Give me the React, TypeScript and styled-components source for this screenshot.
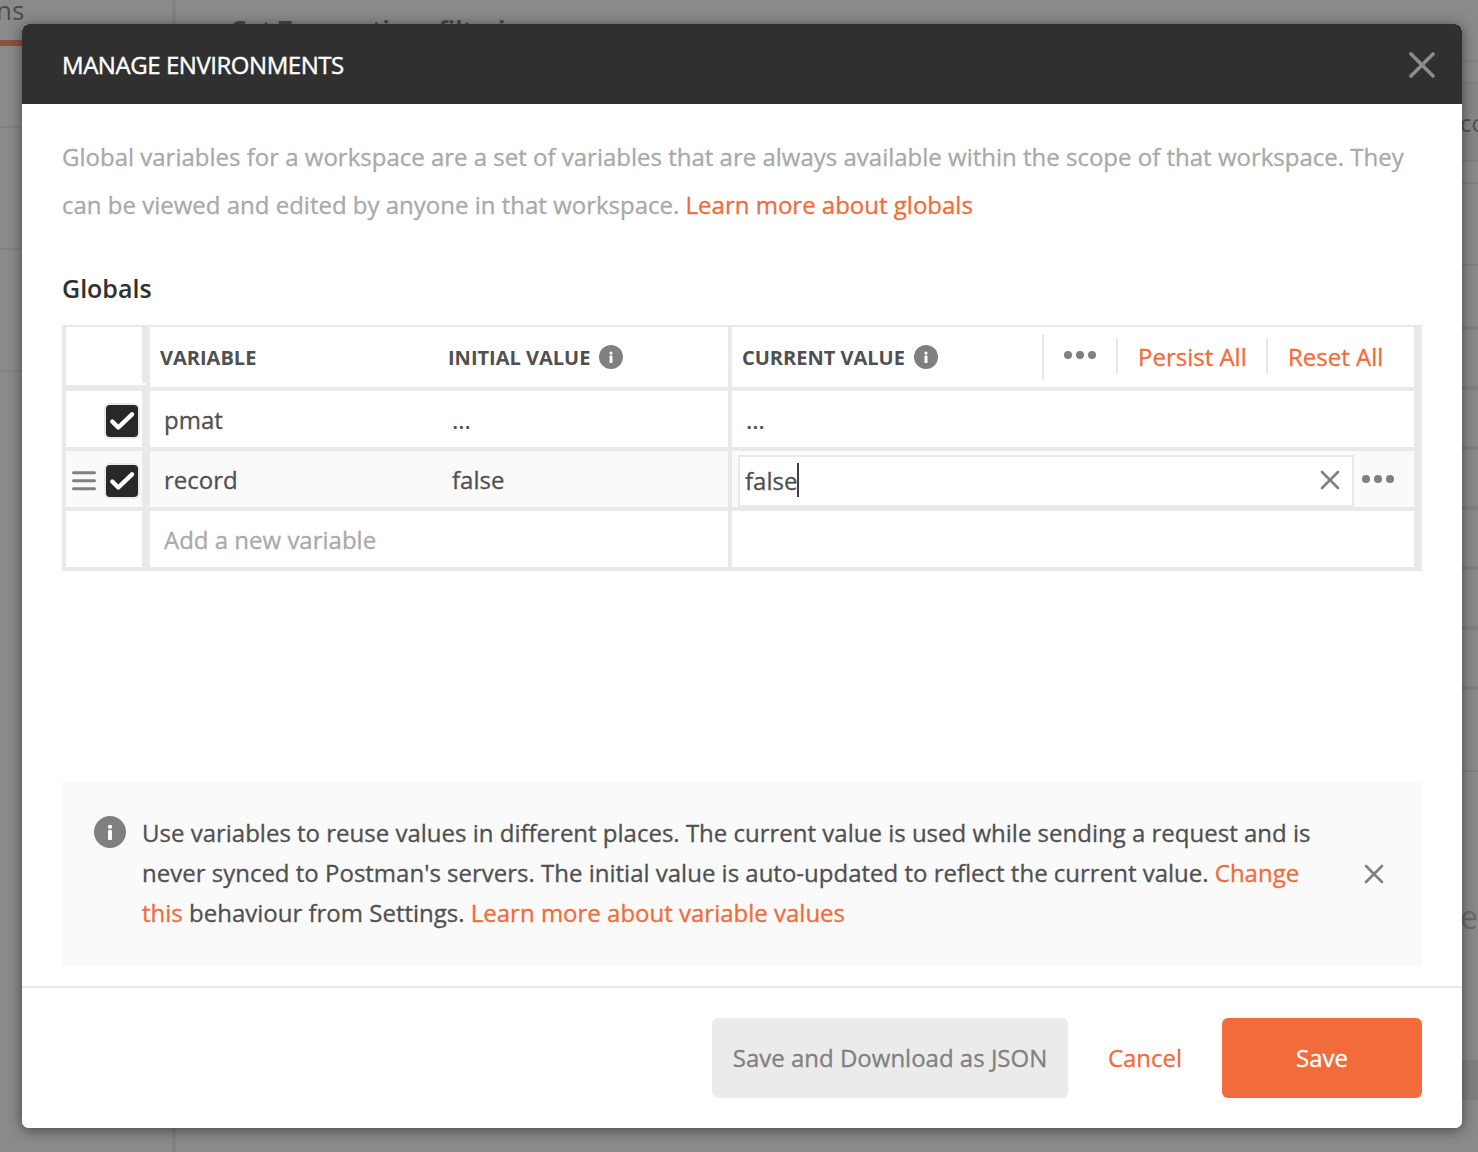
import React from "react";
import styled, { createGlobalStyle, css } from "styled-components";

const GlobalStyle = createGlobalStyle`
  * { box-sizing: border-box; }
  body { margin: 0; background: #8a8a8a; }
  button { font: inherit; letter-spacing: inherit; border: 0; padding: 0; background: none; cursor: pointer; }
`;

const LINE = "#e9e9e9";
const ORANGE = "#f26b3a";
const GREY = "#808080";

const Screen = styled.div`
  position: relative;
  display: flex;
  width: 1478px;
  height: 1152px;
  overflow: hidden;
  background: #8a8a8a;
  color: #505050;
  font-family: "Open Sans", "Noto Sans", sans-serif;
  font-size: 24px;
`;

/* Dimmed workspace behind the dialog */
const Sidebar = styled.aside`
  width: 176px;
  flex: none;
  border-right: 4px solid #828282;
`;
const SidebarTab = styled.div`
  height: 46px;
  border-bottom: 6px solid #8f5040;
  line-height: 20px;
  font-size: 26px;
  color: #4c4c4c;
  padding-left: 0;
  text-indent: -4px;
`;
const SidebarItem = styled.div<{ $height: number }>`
  height: ${(p) => p.$height}px;
  border-bottom: 2px solid #838383;
`;
const Workspace = styled.main`
  flex: 1;
  display: flex;
  flex-direction: column;
`;
const RequestTitle = styled.div`
  height: 62px;
  display: flex;
  gap: 16px;
  padding: 11px 0 0 26px;
  line-height: 36px;
  font-weight: 700;
  color: #484848;
  border-bottom: 2px solid #828282;
`;
const Strip = styled.div<{ $height: number; $line?: number; $fill?: string }>`
  flex: none;
  display: flex;
  align-items: center;
  justify-content: flex-end;
  height: ${(p) => p.$height}px;
  border-bottom: ${(p) => p.$line ?? 0}px solid #808080;
  background: ${(p) => p.$fill ?? "transparent"};
`;
const StripText = styled.span<{ $size: number; $color: string }>`
  width: 18px;
  overflow: hidden;
  white-space: nowrap;
  font-size: ${(p) => p.$size}px;
  color: ${(p) => p.$color};
`;

/* Dialog */
const Dialog = styled.section`
  position: absolute;
  left: 22px;
  top: 24px;
  width: 1440px;
  height: 1104px;
  display: flex;
  flex-direction: column;
  border-radius: 7px;
  overflow: hidden;
  background: #fff;
`;
const DialogShadow = styled(Dialog)`
  overflow: visible;
  box-shadow: 0 2px 14px rgba(0, 0, 0, 0.5);
`;
const Header = styled.header`
  height: 80px;
  flex: none;
  display: flex;
  align-items: center;
  justify-content: space-between;
  padding: 1px 27px 0 40px;
  background: #303030;
  color: #fff;
`;
const Title = styled.h1`
  margin: 0;
  font-size: 24px;
  font-weight: 500;
  letter-spacing: -0.45px;
  -webkit-text-stroke: 0.4px #fff;
`;
const Body = styled.div`
  flex: 1;
  display: flex;
  flex-direction: column;
  padding: 29px 40px 20px;
`;
const Description = styled.p`
  margin: 0;
  line-height: 48px;
  color: #a9a9a9;
  white-space: nowrap;
  -webkit-text-stroke: 0.3px currentColor;
`;
const Link = styled.a`
  color: ${ORANGE};
  cursor: pointer;
`;
const SectionTitle = styled.h2`
  margin: 42px 0 20px;
  font-size: 25px;
  line-height: 34px;
  font-weight: 600;
  color: #303030;
`;

const Table = styled.div`
  display: grid;
  grid-template-columns: 76px 288px 290px 682px;
  grid-template-rows: 60px 56px 56px 56px;
  gap: 4px;
  padding: 2px 4px 4px;
  background: ${LINE};
`;
const Cell = styled.div<{ $active?: boolean; $muted?: boolean }>`
  display: flex;
  align-items: center;
  padding: 0 0 0 14px;
  background: ${(p) => (p.$active ? "#fafafa" : "#fff")};
  color: ${(p) => (p.$muted ? "#a9a9a9" : "#505050")};
  -webkit-text-stroke: 0.3px currentColor;
`;
const NameCell = styled(Cell)`
  margin-left: 4px;
  width: 288px;
`;
const HandleCell = styled(Cell)`
  justify-content: space-between;
  padding: 4px 4px 0 6px;
`;
const HeadCorner = styled(Cell)`
  position: relative;
  height: 58px;
  &::after {
    content: "";
    position: absolute;
    right: -4px;
    bottom: 0;
    width: 4px;
    height: 2px;
    background: #fff;
  }
`;
const headText = css`
  gap: 9px;
  padding-left: 10px;
  font-size: 20px;
  font-weight: 700;
  -webkit-text-stroke: 0;
`;
const HeadCell = styled(Cell)`
  ${headText}
`;
const HeadNameCell = styled(NameCell)`
  ${headText}
`;
const HeadActions = styled.div`
  display: flex;
  align-items: center;
  height: 46px;
  margin-left: auto;
  padding-right: 31px;
  border-left: 2px solid ${LINE};
  font-size: 24px;
  font-weight: 400;
  -webkit-text-stroke: 0.3px currentColor;
`;
const MoreAction = styled.button`
  display: flex;
  padding: 0 20px 4px;
`;
const TextAction = styled.button<{ $width: number }>`
  height: 36px;
  width: ${(p) => p.$width}px;
  margin-bottom: 2px;
  border-left: 2px solid ${LINE};
  color: ${ORANGE};
  text-align: left;
  padding-left: 20px;
  white-space: nowrap;
`;
const Checkbox = styled.span`
  display: flex;
  width: 32px;
  height: 32px;
  margin-left: auto;
  border-radius: 4px;
  background: #282828;
  box-shadow: 0 0 0 2px #e9e9e9;
`;
const Editor = styled.div`
  align-self: flex-end;
  display: flex;
  align-items: center;
  width: 616px;
  height: 52px;
  padding: 0 12px 2px 5px;
  border: 2px solid ${LINE};
  background: #fff;
`;
const EditingCell = styled(Cell)`
  padding-left: 6px;
`;
const Caret = styled.i`
  width: 2px;
  height: 34px;
  margin-right: auto;
  background: #404040;
`;
const RowMore = styled.button`
  display: flex;
  margin-left: 8px;
`;

const Notice = styled.aside`
  display: flex;
  margin-top: auto;
  height: 184px;
  padding: 31px 32px 0;
  background: #fafafa;
`;
const NoticeText = styled.p`
  margin: 0 0 0 16px;
  line-height: 40px;
  white-space: nowrap;
  -webkit-text-stroke: 0.3px currentColor;
`;
const NoticeIcon = styled.span`
  display: flex;
  padding-top: 3px;
`;
const NoticeClose = styled.button`
  display: flex;
  height: 20px;
  margin: 51px 6px 0 auto;
`;

const Footer = styled.footer`
  height: 142px;
  flex: none;
  display: flex;
  justify-content: flex-end;
  padding: 30px 40px;
  border-top: 2px solid ${LINE};
`;
const Button = styled.button<{ $kind: "primary" | "secondary" | "text" }>`
  height: 80px;
  border-radius: 6px;
  padding-bottom: 2px;
  white-space: nowrap;
  -webkit-text-stroke: 0.3px currentColor;
  ${(p) =>
    p.$kind === "primary"
      ? css`width: 200px; background: ${ORANGE}; color: #fff;`
      : p.$kind === "secondary"
      ? css`width: 356px; background: #ebebeb; color: #808080;`
      : css`width: 154px; color: ${ORANGE};`}
`;

const InfoIcon = ({ size }: { size: number }) => (
  <svg width={size} height={size} viewBox="0 0 32 32">
    <circle cx="16" cy="16" r="16" fill={GREY} />
    <circle cx="16" cy="10.8" r="2.1" fill="#fff" />
    <rect x="14" y="14" width="4" height="10" rx="0.8" fill="#fff" />
  </svg>
);
const CloseIcon = ({ size, stroke, color = GREY }: { size: number; stroke: number; color?: string }) => (
  <svg width={size} height={size} fill="none" stroke={color} strokeWidth={stroke} strokeLinecap="round">
    <path d={`M2 2L${size - 2} ${size - 2}M${size - 2} 2L2 ${size - 2}`} />
  </svg>
);
const Dots = () => (
  <svg width="32" height="8" fill={GREY}>
    <circle cx="4" cy="4" r="4" />
    <circle cx="16" cy="4" r="4" />
    <circle cx="28" cy="4" r="4" />
  </svg>
);
const Grip = () => (
  <svg width="24" height="20" stroke={GREY} strokeWidth="3" strokeLinecap="round">
    <path d="M1.5 1.7H22.5M1.5 9.7H22.5M1.5 17.7H22.5" />
  </svg>
);
const Check = () => (
  <Checkbox>
    <svg width="32" height="32" fill="none" stroke="#fff" strokeWidth="4.4" strokeLinecap="round" strokeLinejoin="round">
      <path d="M6.3 16.5L12.3 22.5L26 9.3" />
    </svg>
  </Checkbox>
);

export default function App() {
  return (
    <Screen>
      <GlobalStyle />
      <Sidebar>
        <SidebarTab>ns</SidebarTab>
        <SidebarItem $height={82} />
        <SidebarItem $height={122} />
        <SidebarItem $height={122} />
      </Sidebar>
      <Workspace>
        <RequestTitle>
          <span>▸</span>
          <span>Get Transactions filtering</span>
        </RequestTitle>
        <Strip $height={22} $line={2} />
        <Strip $height={78} $line={2} $fill="#868686">
          <StripText $size={24} $color="#505050">co</StripText>
        </Strip>
        <Strip $height={22} $line={2} />
        <Strip $height={82} $line={2} />
        <Strip $height={64} $line={4} />
        {[0, 1, 2, 3, 4, 5].map((row) => (
          <Strip key={row} $height={60} $line={4} />
        ))}
        <Strip $height={82} $line={2} />
        <Strip $height={288}>
          <StripText $size={32} $color="#6c6c6c">e</StripText>
        </Strip>
        <Strip $height={40} $fill="#808080" />
      </Workspace>

      <DialogShadow />
      <Dialog role="dialog">
        <Header>
          <Title>MANAGE ENVIRONMENTS</Title>
          <CloseIcon size={26} stroke={3.6} color="#8c8c8c" />
        </Header>
        <Body>
          <Description>
            Global variables for a workspace are a set of variables that are always available within the scope of that workspace. They
            <br />
            can be viewed and edited by anyone in that workspace. <Link>Learn more about globals</Link>
          </Description>
          <SectionTitle>Globals</SectionTitle>
          <Table>
            <HeadCorner />
            <HeadNameCell>VARIABLE</HeadNameCell>
            <HeadCell>
              INITIAL VALUE <InfoIcon size={24} />
            </HeadCell>
            <HeadCell>
              CURRENT VALUE <InfoIcon size={24} />
              <HeadActions>
                <MoreAction><Dots /></MoreAction>
                <TextAction $width={150}>Persist All</TextAction>
                <TextAction $width={117}>Reset All</TextAction>
              </HeadActions>
            </HeadCell>

            <HandleCell><Check /></HandleCell>
            <NameCell>pmat</NameCell>
            <Cell>...</Cell>
            <Cell>...</Cell>

            <HandleCell $active><Grip /><Check /></HandleCell>
            <NameCell $active>record</NameCell>
            <Cell $active>false</Cell>
            <EditingCell $active>
              <Editor>
                false
                <Caret />
                <CloseIcon size={20} stroke={2.6} />
              </Editor>
              <RowMore><Dots /></RowMore>
            </EditingCell>

            <Cell />
            <NameCell $muted>Add a new variable</NameCell>
            <Cell />
            <Cell />
          </Table>
          <Notice>
            <NoticeIcon><InfoIcon size={32} /></NoticeIcon>
            <NoticeText>
              Use variables to reuse values in different places. The current value is used while sending a request and is
              <br />
              never synced to Postman's servers. The initial value is auto-updated to reflect the current value. <Link>Change
              <br />
              this</Link> behaviour from Settings. <Link>Learn more about variable values</Link>
            </NoticeText>
            <NoticeClose><CloseIcon size={20} stroke={2.6} /></NoticeClose>
          </Notice>
        </Body>
        <Footer>
          <Button $kind="secondary">Save and Download as JSON</Button>
          <Button $kind="text">Cancel</Button>
          <Button $kind="primary">Save</Button>
        </Footer>
      </Dialog>
    </Screen>
  );
}
